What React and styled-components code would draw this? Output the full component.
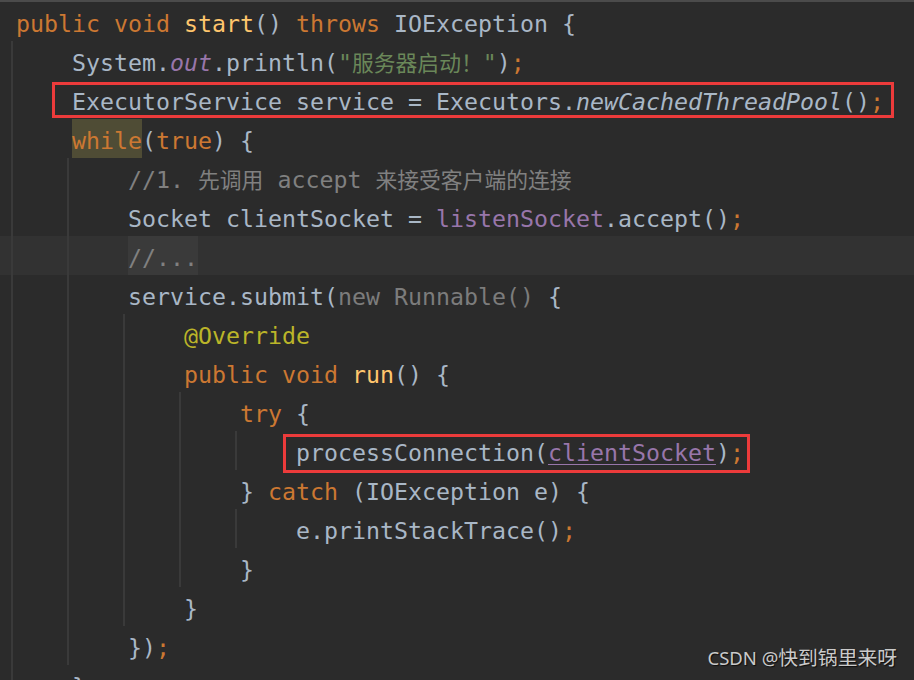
import React from 'react';
import styled, { createGlobalStyle, css } from 'styled-components';

const GlobalStyle = createGlobalStyle`
    html, body {
        margin: 0;
        padding: 0;
        background: #2b2b2b;
        overflow: hidden;
    }
`;

const Frame = styled.div`
    position: relative;
    width: 914px;
    height: 680px;
    overflow: hidden;
    background: #2b2b2b;
`;

const Editor = styled.div`
    display: flex;
    flex-direction: column;
    border-top: 2px solid #4b4b4b;
    font-family: 'DejaVu Sans Mono', 'Liberation Mono', monospace;
    font-size: 23.25px;
    color: #a9b7c6;
`;

// indent guides are painted as thin gradient strips on each row
const guideLayers = (indent, fill) => {
    const layers = [];
    for (let k = 0; k < indent; k++) {
        layers.push(`linear-gradient(#3a3a3a, #3a3a3a) ${11 + k * 56}px 0 / 2px 100% no-repeat`);
    }
    layers.push(fill);
    return layers.join(', ');
};

const Line = styled.div`
    flex: none;
    height: 39px;
    box-sizing: border-box;
    padding: 4px 0 0 ${(p) => 16 + p.$indent * 56}px;
    line-height: 35px;
    white-space: pre;
    background: ${(p) => guideLayers(p.$indent, p.$current ? '#323232' : '#2b2b2b')};
`;

const Cjk = styled.span`
    font-family: 'Noto Sans CJK SC', sans-serif;
    font-size: 21.8px;
    line-height: 1;
`;

const colors = {
    kw: '#cc7832',
    fn: '#ffc66d',
    str: '#6a8759',
    cmt: '#808080',
    ann: '#bbb529',
    dim: '#7c7c7c',
    field: '#9876aa',
};

const Tok = styled.span`
    color: ${(p) => colors[p.$kind] || '#a9b7c6'};
    ${(p) => p.$italic && css`font-style: italic;`}
    ${(p) => p.$underline && css`
        text-decoration: underline;
        text-decoration-color: #9876aa;
        text-underline-offset: 3px;
        text-decoration-thickness: 1px;
    `}
    ${(p) => p.$mark && css`
        padding: 8px 0 4px;
        background: ${p.$mark};
    `}
`;

const Highlight = styled.div`
    position: absolute;
    border: 3px solid #ec3b3b;
    box-sizing: border-box;
    left: ${(p) => p.$x}px;
    top: ${(p) => p.$y}px;
    width: ${(p) => p.$w}px;
    height: ${(p) => p.$h}px;
    pointer-events: none;
`;

const Watermark = styled.div`
    position: absolute;
    right: 17px;
    bottom: 9px;
    font-family: 'Noto Sans', 'Noto Sans CJK SC', sans-serif;
    font-size: 18.5px;
    color: #cacaca;
    text-shadow: 1px 1px 1px rgba(0, 0, 0, 0.7);
    white-space: pre;

    & > span {
        font-family: 'Noto Sans CJK SC', sans-serif;
        font-size: 19.8px;
    }
`;

const splitCjk = (text) =>
    text.split(/([\u3000-\u9fff\uff00-\uffef]+)/).map((part, i) =>
        /[\u3000-\u9fff\uff00-\uffef]/.test(part) ? <Cjk key={i}>{part}</Cjk> : part
    );

// [kind, text, options]
const code = [
    { indent: 0, t: [['kw', 'public void '], ['fn', 'start'], ['', '() '], ['kw', 'throws '], ['', 'IOException {']] },
    { indent: 1, t: [['', 'System.'], ['field', 'out', { italic: true }], ['', '.println('], ['str', '"服务器启动！"'], ['', ')'], ['kw', ';']] },
    { indent: 1, t: [['', 'ExecutorService service = Executors.'], ['', 'newCachedThreadPool', { italic: true }], ['', '()'], ['kw', ';']] },
    { indent: 1, t: [['kw', 'while', { mark: '#4f4c35' }], ['', '('], ['kw', 'true'], ['', ') {']] },
    { indent: 2, t: [['cmt', '//1. 先调用 accept 来接受客户端的连接']] },
    { indent: 2, t: [['', 'Socket clientSocket = '], ['field', 'listenSocket'], ['', '.accept()'], ['kw', ';']] },
    { indent: 2, current: true, t: [['cmt', '//...', { mark: '#3a3a3a' }]] },
    { indent: 2, t: [['', 'service.submit('], ['dim', 'new Runnable() '], ['', '{']] },
    { indent: 3, t: [['ann', '@Override']] },
    { indent: 3, t: [['kw', 'public void '], ['fn', 'run'], ['', '() {']] },
    { indent: 4, t: [['kw', 'try '], ['', '{']] },
    { indent: 5, t: [['', 'processConnection('], ['field', 'clientSocket', { underline: true }], ['', ')'], ['kw', ';']] },
    { indent: 4, t: [['', '} '], ['kw', 'catch '], ['', '(IOException e) {']] },
    { indent: 5, t: [['', 'e.printStackTrace()'], ['kw', ';']] },
    { indent: 4, t: [['', '}']] },
    { indent: 3, t: [['', '}']] },
    { indent: 2, t: [['', '})'], ['kw', ';']] },
    { indent: 1, t: [['', '}']] },
];

const CodeLine = ({ line }) => (
    <Line $indent={line.indent} $current={line.current}>
        {line.t.map(([kind, text, opt = {}], i) => (
            <Tok key={i} $kind={kind} $italic={opt.italic} $underline={opt.underline} $mark={opt.mark}>
                {splitCjk(text)}
            </Tok>
        ))}
    </Line>
);

export default function App() {
    return (
        <Frame>
            <GlobalStyle />
            <Editor>
                {code.map((line, i) => (
                    <CodeLine key={i} line={line} />
                ))}
            </Editor>
            {/* red annotation boxes drawn over the code */}
            <Highlight $x={52} $y={82} $w={842} $h={36} />
            <Highlight $x={283} $y={434} $w={467} $h={39} />
            <Watermark>
                CSDN @<span>快到锅里来呀</span>
            </Watermark>
        </Frame>
    );
}
